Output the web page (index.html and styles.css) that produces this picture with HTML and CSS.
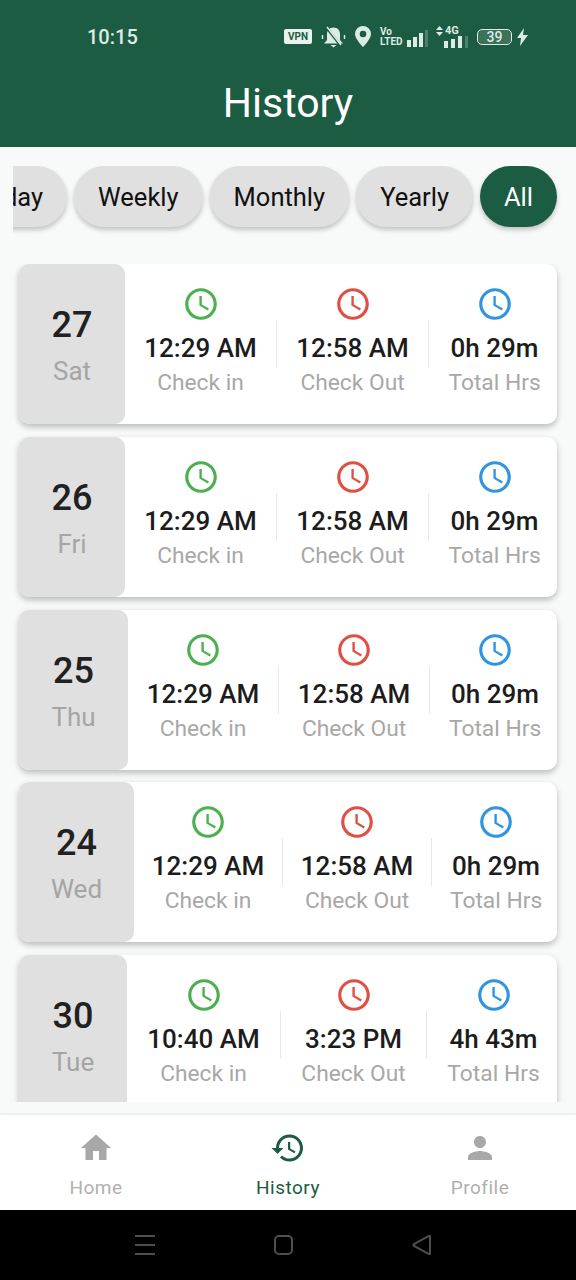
FILE: index.html
```html
<!DOCTYPE html>
<html>
<head>
<meta charset="utf-8">
<title>History</title>
<link rel="stylesheet" href="styles.css">
</head>
<body>
<div class="screen">
  <svg width="0" height="0" class="defs">
    <symbol id="clock" viewBox="0 0 24 24"><path d="M11.99 2C6.47 2 2 6.48 2 12s4.47 10 9.99 10C17.52 22 22 17.52 22 12S17.52 2 11.99 2zM12 20c-4.42 0-8-3.58-8-8s3.58-8 8-8 8 3.58 8 8-3.58 8-8 8zm.5-13H11v6l5.25 3.15.75-1.23-4.5-2.67z"/></symbol>
  </svg>

  <header class="appbar">
    <div class="status">
      <span class="time">10:15</span>
      <div class="status-icons">
        <span class="vpn">VPN</span>
        <svg class="bell" width="25" height="22" viewBox="0 0 25 22"><path d="M12.500 1.500c-3.900 0-6.500 2.800-6.500 6.500v6l-3 3.500h19L19 14V8c0-3.700-2.600-6.500-6.500-6.500zM9.500 19h6l-3 2.500z"/><path d="M5 1l15 19" stroke="#1c5c42" stroke-width="2.800"/><path d="M6 1l14 18" stroke="#dcebe4" stroke-width="1.500"/><path d="M1.500 9v4M23.500 9v4" stroke="#dcebe4" stroke-width="1.400"/></svg>
        <svg class="pin" width="16" height="21" viewBox="0 0 16 21"><path fill-rule="evenodd" d="M8 0a8 8 0 0 0-8 8c0 5 8 13 8 13s8-8 8-13a8 8 0 0 0-8-8zm0 4.700a3.300 3.300 0 1 1 0 6.600 3.300 3.300 0 0 1 0-6.600z"/></svg>
        <span class="volte">Vo<br>LTED</span>
        <svg class="bars" width="21" height="17" viewBox="0 0 21 17"><rect x="0" y="10" width="4" height="7"/><rect x="6" y="7" width="4" height="10"/><rect x="12" y="3" width="4" height="14"/><rect x="18" y="0" width="3" height="17" opacity=".25"/></svg>
        <span class="net">
          <span class="net-top"><svg width="7" height="10" viewBox="0 0 7 10"><path d="M3.500 0L7 4H0zM3.500 10L0 6h7z"/></svg><span class="net-label">4G</span></span>
          <svg width="24" height="12" viewBox="0 0 24 12"><rect x="0" y="5" width="4" height="7"/><rect x="7" y="3" width="4" height="9"/><rect x="14" y="0" width="4" height="12"/><rect x="21" y="0" width="3" height="12" opacity=".25"/></svg>
        </span>
        <span class="battery"><span class="battery-num">39</span></span>
        <svg class="bolt" width="11" height="18" viewBox="0 0 11 18"><path d="M7 0L0 10h4l-1 8 8-11H6z"/></svg>
      </div>
    </div>
    <h1 class="title">History</h1>
  </header>

  <main class="content">
    <div class="chips">
      <span class="chip">Today</span>
      <span class="chip">Weekly</span>
      <span class="chip">Monthly</span>
      <span class="chip">Yearly</span>
      <span class="chip active">All</span>
    </div>

    <div class="list">
      <section class="card">
        <div class="date"><b>27</b><span>Sat</span></div>
        <div class="col"><svg class="ico green"><use href="#clock"/></svg><b>12:29 AM</b><span>Check in</span></div>
        <i class="divider"></i>
        <div class="col"><svg class="ico red"><use href="#clock"/></svg><b>12:58 AM</b><span>Check Out</span></div>
        <i class="divider"></i>
        <div class="col"><svg class="ico blue"><use href="#clock"/></svg><b>0h 29m</b><span>Total Hrs</span></div>
      </section>
      <section class="card">
        <div class="date"><b>26</b><span>Fri</span></div>
        <div class="col"><svg class="ico green"><use href="#clock"/></svg><b>12:29 AM</b><span>Check in</span></div>
        <i class="divider"></i>
        <div class="col"><svg class="ico red"><use href="#clock"/></svg><b>12:58 AM</b><span>Check Out</span></div>
        <i class="divider"></i>
        <div class="col"><svg class="ico blue"><use href="#clock"/></svg><b>0h 29m</b><span>Total Hrs</span></div>
      </section>
      <section class="card">
        <div class="date wide-thu"><b>25</b><span>Thu</span></div>
        <div class="col"><svg class="ico green"><use href="#clock"/></svg><b>12:29 AM</b><span>Check in</span></div>
        <i class="divider"></i>
        <div class="col"><svg class="ico red"><use href="#clock"/></svg><b>12:58 AM</b><span>Check Out</span></div>
        <i class="divider"></i>
        <div class="col"><svg class="ico blue"><use href="#clock"/></svg><b>0h 29m</b><span>Total Hrs</span></div>
      </section>
      <section class="card">
        <div class="date wide-wed"><b>24</b><span>Wed</span></div>
        <div class="col"><svg class="ico green"><use href="#clock"/></svg><b>12:29 AM</b><span>Check in</span></div>
        <i class="divider"></i>
        <div class="col"><svg class="ico red"><use href="#clock"/></svg><b>12:58 AM</b><span>Check Out</span></div>
        <i class="divider"></i>
        <div class="col"><svg class="ico blue"><use href="#clock"/></svg><b>0h 29m</b><span>Total Hrs</span></div>
      </section>
      <section class="card">
        <div class="date wide-tue"><b>30</b><span>Tue</span></div>
        <div class="col"><svg class="ico green"><use href="#clock"/></svg><b>10:40 AM</b><span>Check in</span></div>
        <i class="divider"></i>
        <div class="col"><svg class="ico red"><use href="#clock"/></svg><b>3:23 PM</b><span>Check Out</span></div>
        <i class="divider"></i>
        <div class="col"><svg class="ico blue"><use href="#clock"/></svg><b>4h 43m</b><span>Total Hrs</span></div>
      </section>
    </div>
  </main>

  <nav class="tabs">
    <div class="tab">
      <svg width="36" height="36" viewBox="0 0 24 24"><path d="M10 20v-6h4v6h5v-8h3L12 3 2 12h3v8z"/></svg>
      <span>Home</span>
    </div>
    <div class="tab on">
      <svg width="36" height="36" viewBox="0 0 24 24"><path d="M13 3c-4.970 0-9 4.030-9 9H1l3.890 3.890.07.14L9 12H6c0-3.870 3.130-7 7-7s7 3.130 7 7-3.130 7-7 7c-1.930 0-3.680-.79-4.940-2.060l-1.420 1.420C8.270 19.990 10.510 21 13 21c4.970 0 9-4.030 9-9s-4.030-9-9-9zm-1 5v5l4.280 2.540.72-1.210-3.500-2.080V8H12z"/></svg>
      <span>History</span>
    </div>
    <div class="tab">
      <svg width="36" height="36" viewBox="0 0 24 24"><path d="M12 12c2.210 0 4-1.790 4-4s-1.790-4-4-4-4 1.790-4 4 1.790 4 4 4zm0 2c-2.670 0-8 1.340-8 4v2h16v-2c0-2.660-5.330-4-8-4z"/></svg>
      <span>Profile</span>
    </div>
  </nav>

  <footer class="sysbar">
    <svg width="20" height="20" viewBox="0 0 20 20"><path d="M0 1h20M0 10h20M0 19h20"/></svg>
    <svg width="19" height="20" viewBox="0 0 19 20"><rect x="1" y="1" width="17" height="18" rx="4"/></svg>
    <svg width="19" height="20" viewBox="0 0 19 20"><path d="M18 1.500v17q0 1-1 .6L2 11q-1-1 0-2L17 .9q1-.4 1 .6z"/></svg>
  </footer>
</div>
</body>
</html>
```

FILE: styles.css
```css
* { box-sizing: border-box; }
html, body { margin: 0; padding: 0; }
body { font-family: Roboto, "Liberation Sans", sans-serif; }

.defs { position: absolute; }

.screen {
  width: 576px;
  height: 1280px;
  display: flex;
  flex-direction: column;
  overflow: hidden;
  background: #f8f9f9;
}

/* top bar */
.appbar { height: 147px; background: #1c5c42; color: #fff; flex: none; }
.status {
  height: 72px;
  padding: 1px 48px 0 87px;
  display: flex;
  align-items: center;
  justify-content: space-between;
  color: #dcebe4;
}
.time { font-size: 20px; font-weight: 500; }
.status-icons { display: flex; align-items: center; fill: #dcebe4; stroke: none; }
.vpn {
  width: 28px;
  height: 15px;
  background: #e9f2ee;
  color: #1c5c42;
  border-radius: 2px;
  font-size: 10px;
  font-weight: 700;
  line-height: 15px;
  text-align: center;
}
.bell { margin-left: 9px; }
.pin { margin-left: 9px; }
.volte { margin-left: 9px; width: 20px; font-size: 10px; line-height: 10px; font-weight: 700; }
.bars { margin-left: 7px; margin-top: 4px; }
.net { margin-left: 8px; width: 32px; display: flex; flex-direction: column; align-items: flex-end; }
.net-top { display: flex; align-self: flex-start; align-items: center; gap: 2px; }
.net-label { font-size: 11px; line-height: 11px; font-weight: 700; }
.battery {
  margin-left: 9px;
  width: 35px;
  height: 16px;
  border: 1px solid #dcebe4;
  border-radius: 5px;
  background: #3d7259;
  display: block;
}
.battery-num { display: block; font-size: 14px; line-height: 14px; text-align: center; font-weight: 500; }
.bolt { margin-left: 5px; }
.title { margin: 0; font-size: 41px; font-weight: 400; line-height: 63px; text-align: center; }

/* filter chips */
.content { flex: 1; min-height: 0; display: flex; flex-direction: column; padding-bottom: 13px; }
.chips {
  margin: 19px 0 0 13px;
  padding: 0 19px 10px 0;
  flex: none;
  display: flex;
  justify-content: flex-end;
  gap: 7px;
  overflow: hidden;
}
.chip {
  flex: none;
  height: 61px;
  padding: 0 24px;
  border-radius: 31px;
  background: #e0e0e0;
  color: #111;
  font-size: 25.500px;
  line-height: 63px;
  box-shadow: 0 3px 5px rgba(0, 0, 0, .22);
}
.chip.active { background: #1c5c42; color: #fff; }

/* day cards */
.list {
  flex: 1;
  min-height: 0;
  margin-top: 27px;
  padding: 0 19px;
  display: flex;
  flex-direction: column;
  gap: 12.750px;
  overflow: hidden;
}
.card {
  flex: none;
  height: 160px;
  background: #fff;
  border-radius: 10px;
  box-shadow: 0 3px 6px rgba(0, 0, 0, .25);
  display: flex;
  align-items: center;
}
.date {
  width: 106px;
  height: 100%;
  flex: none;
  background: #e0e0e0;
  border-radius: 10px;
  display: flex;
  flex-direction: column;
  align-items: center;
  justify-content: center;
}
.wide-thu { width: 109px; }
.wide-wed { width: 115px; }
.wide-tue { width: 108px; }
.date b { font-size: 36px; font-weight: 500; line-height: 46px; color: #212121; }
.date span { font-size: 26px; line-height: 30px; color: #a5a5a5; margin-top: 8px; }

.col {
  flex: 1 1 auto;
  align-self: flex-start;
  padding-top: 21px;
  display: flex;
  flex-direction: column;
  align-items: center;
}
.col:last-child { margin-right: -3px; }
.col b { font-size: 26px; font-weight: 500; line-height: 32px; margin-top: 9px; color: #1c1c1c; white-space: nowrap; }
.col span { font-size: 22.800px; line-height: 30px; margin-top: 4px; color: #a8a8a8; white-space: nowrap; }
.ico { width: 38px; height: 38px; }
.green { fill: #4caf50; }
.red { fill: #e04f44; }
.blue { fill: #2f95e0; }
.divider { width: 1px; height: 48px; flex: none; background: #e8e8e8; }

/* bottom nav */
.tabs {
  flex: none;
  height: 95px;
  background: #fff;
  display: flex;
  box-shadow: 0 -1px 2px rgba(0, 0, 0, .08);
}
.tab {
  flex: 1;
  display: flex;
  flex-direction: column;
  align-items: center;
  padding-top: 15px;
  color: #b0b0b0;
  fill: #a8a8a8;
  font-size: 19px;
  letter-spacing: .5px;
  line-height: 24px;
}
.tab span { margin-top: 10px; }
.tab.on { color: #1c5c42; fill: #1c5c42; }

/* android bar */
.sysbar {
  flex: none;
  height: 70px;
  background: #000;
  padding-left: 135px;
  display: flex;
  align-items: center;
  gap: 119px;
  fill: none;
  stroke: #4e4e4e;
  stroke-width: 2;
}
```
